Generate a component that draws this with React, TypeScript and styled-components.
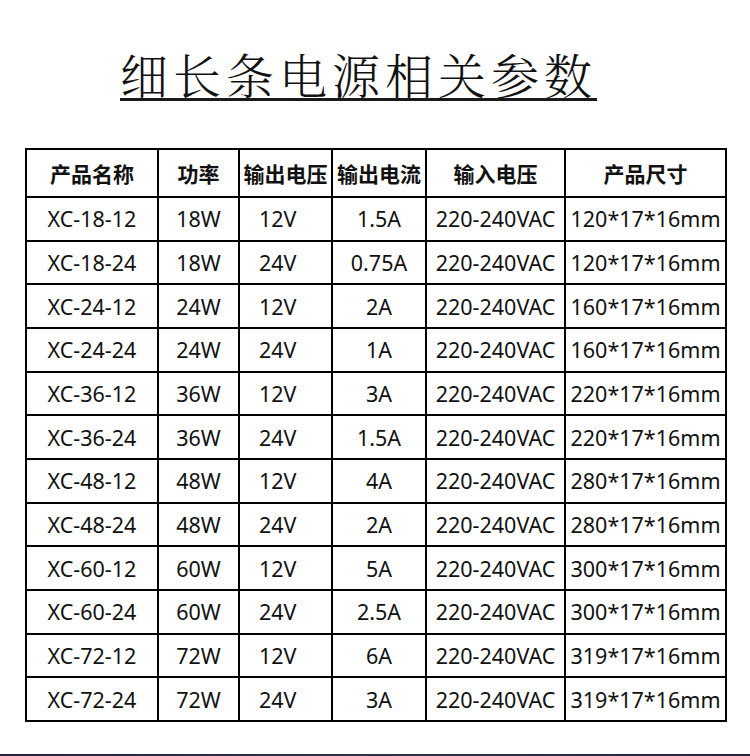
import React from "react";
import styled, { createGlobalStyle } from "styled-components";

const GlobalStyle = createGlobalStyle`
  html, body {
    margin: 0;
    padding: 0;
    background: #fff;
  }
`;

const Page = styled.div`
  width: 750px;
  height: 756px;
  display: flex;
  flex-direction: column;
  background: #fff;
  color: #111;
  overflow: hidden;
`;

const TitleRow = styled.div`
  padding: 50px 0 0 120px;
`;

const Title = styled.h1`
  display: inline-block;
  margin: 0;
  font-family: "Noto Serif CJK SC", "Noto Sans CJK SC", serif;
  font-weight: 300;
  font-size: 48px;
  line-height: 48px;
  letter-spacing: 5px;
  border-bottom: 3px solid #1a1a1a;
`;

const Table = styled.table`
  margin: 47px 0 0 25px;
  width: 700px;
  table-layout: fixed;
  border-collapse: collapse;
  border: 2px solid #000;
`;

const HeadCell = styled.th`
  height: 46px;
  padding: 0;
  border: 2px solid #000;
  font-family: "Noto Sans CJK SC", sans-serif;
  font-weight: 700;
  font-size: 21px;
  text-align: center;
  vertical-align: middle;
`;

const Cell = styled.td<{ $left?: boolean }>`
  height: 41.67px;
  padding: 0 0 0 ${(p) => (p.$left ? "19px" : "0")};
  border: 2px solid #000;
  font-family: "Noto Sans", "Open Sans", sans-serif;
  font-size: 21.5px;
  text-align: ${(p) => (p.$left ? "left" : "center")};
  vertical-align: middle;
  white-space: nowrap;
`;

const BottomBar = styled.div`
  margin-top: auto;
  height: 2px;
  background: linear-gradient(90deg, #23233a, #2e2f4c 50%, #23233a);
`;

const widths = [132, 81, 93, 94, 139, 161];
const heads = ["产品名称", "功率", "输出电压", "输出电流", "输入电压", "产品尺寸"];

const rows: [string, string, string, string, string][] = [
  ["XC-18-12", "18W", "12V", "1.5A", "120"],
  ["XC-18-24", "18W", "24V", "0.75A", "120"],
  ["XC-24-12", "24W", "12V", "2A", "160"],
  ["XC-24-24", "24W", "24V", "1A", "160"],
  ["XC-36-12", "36W", "12V", "3A", "220"],
  ["XC-36-24", "36W", "24V", "1.5A", "220"],
  ["XC-48-12", "48W", "12V", "4A", "280"],
  ["XC-48-24", "48W", "24V", "2A", "280"],
  ["XC-60-12", "60W", "12V", "5A", "300"],
  ["XC-60-24", "60W", "24V", "2.5A", "300"],
  ["XC-72-12", "72W", "12V", "6A", "319"],
  ["XC-72-24", "72W", "24V", "3A", "319"],
];

const App: React.FC = () => {
  return (
    <Page>
      <GlobalStyle />
      <TitleRow>
        <Title>细长条电源相关参数</Title>
      </TitleRow>
      <Table>
        <colgroup>
          {widths.map((w, i) => (
            <col key={i} style={{ width: w }} />
          ))}
        </colgroup>
        <thead>
          <tr>
            {heads.map((h) => (
              <HeadCell key={h}>{h}</HeadCell>
            ))}
          </tr>
        </thead>
        <tbody>
          {rows.map(([model, power, volt, amp, len]) => (
            <tr key={model}>
              <Cell>{model}</Cell>
              <Cell>{power}</Cell>
              <Cell $left>{volt}</Cell>
              <Cell>{amp}</Cell>
              <Cell>220-240VAC</Cell>
              <Cell>{len}*17*16mm</Cell>
            </tr>
          ))}
        </tbody>
      </Table>
      <BottomBar />
    </Page>
  );
};

export default App;
